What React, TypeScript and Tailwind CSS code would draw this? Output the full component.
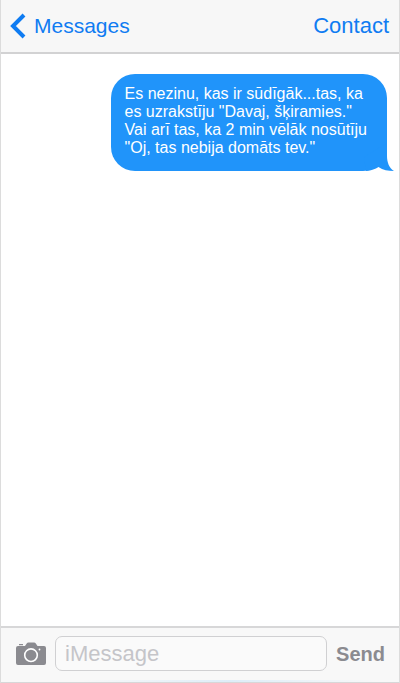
import React, { useState } from 'react';

interface Message {
  id: number;
  lines: string[];
}

const messages: Message[] = [
  {
    id: 1,
    lines: [
      'Es nezinu, kas ir sūdīgāk...tas, ka',
      'es uzrakstīju "Davaj, šķiramies."',
      'Vai arī tas, ka 2 min vēlāk nosūtīju',
      '"Oj, tas nebija domāts tev."',
    ],
  },
];

const Header: React.FC = () => (
  <header className="flex h-[54px] items-center justify-between border-b-2 border-[#d2d2d3] bg-[#f7f7f7] pl-2 pr-[10px] text-[#0f7cf2]">
    <button type="button" className="flex items-center gap-2 text-[21px] leading-6">
      <svg width="17" height="26" viewBox="0 0 17 26" fill="none" stroke="currentColor" strokeWidth="4" aria-hidden="true">
        <path d="M15 2 4 13l11 11" />
      </svg>
      Messages
    </button>
    <button type="button" className="text-[22px] leading-6">Contact</button>
  </header>
);

const Bubble: React.FC<{ message: Message }> = ({ message }) => (
  <div className="relative ml-auto w-fit max-w-[85%] rounded-[24px] bg-[#2094fa] pt-[11px] pr-5 pb-[14px] pl-[14px] text-base leading-[18px] text-white">
    {message.lines.map((line) => (
      <p key={line}>{line}</p>
    ))}
    {/* Tail */}
    <svg className="absolute -right-[7px] bottom-0 text-[#2094fa]" width="32" height="28" viewBox="0 0 32 28" fill="currentColor" aria-hidden="true">
      <path d="M25 0v13c0 6 2 12 7 15-6 0-11-.8-15.500-4C13 26 10 27.500 4 28L2 14z" />
    </svg>
  </div>
);

const CameraIcon: React.FC = () => (
  <svg width="32" height="24" viewBox="0 0 32 24" aria-hidden="true">
    <path
      fill="#8b8b90"
      d="M3 4h7l1.700-2.600Q12.300.5 13.500.5h5.500q1.200 0 1.800.9L22.500 4H29q2 0 2 2v15q0 2-2 2H3q-2 0-2-2V6q0-2 2-2zM4 2h4v1.200H4z"
    />
    <circle cx="16" cy="13.200" r="6.300" fill="none" stroke="#fff" strokeWidth="1.600" />
    <circle cx="24.500" cy="7.500" r="0.900" fill="#fff" />
  </svg>
);

const Composer: React.FC = () => {
  const [text, setText] = useState('');

  return (
    <form
      onSubmit={(e) => e.preventDefault()}
      className="relative flex h-[57px] items-center border-t-2 border-b border-t-[#d7d7d8] border-b-[#d7d7d8] bg-[#f8f8f8] px-[14px] pb-[3px]"
    >
      <button type="button" aria-label="Camera">
        <CameraIcon />
      </button>
      <input
        type="text"
        aria-label="iMessage"
        placeholder="iMessage"
        value={text}
        onChange={(e) => setText(e.target.value)}
        className="ml-2 mr-[9px] h-[35px] min-w-0 flex-1 rounded-[7px] border border-[#d0d0d2] bg-[#fafafa] px-[9px] text-[22px] leading-6 text-gray-700 outline-none placeholder:text-[#c5c5c9]"
      />
      <button type="submit" className="text-xl font-bold leading-6 text-[#8b8b90]">Send</button>
      <div className="absolute bottom-0 left-[20%] h-[2px] w-3/4 bg-linear-to-r from-transparent via-[#deedf8] to-transparent"></div>
    </form>
  );
};

const App: React.FC = () => (
  <div className="flex min-h-screen flex-col border-x border-[#dcdcdc] bg-white font-['Liberation_Sans',Arial,sans-serif]">
    <Header />
    <main className="flex-1 pt-5 pr-3">
      {messages.map((message) => (
        <Bubble key={message.id} message={message} />
      ))}
    </main>
    <Composer />
  </div>
);

export default App;
